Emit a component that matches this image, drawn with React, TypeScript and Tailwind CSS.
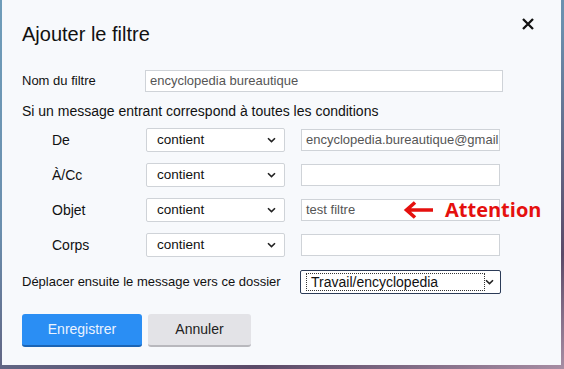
import React from "react";

const Chevron = ({ className = "" }: { className?: string }) => (
  <svg width="9" height="6" viewBox="0 0 9 6" className={className}>
    <path d="M1 1.2 L4.5 4.6 L8 1.2" fill="none" stroke="#222" strokeWidth="1.6" />
  </svg>
);

const Select = () => (
  <div className="w-[139px] h-[24px] bg-white border border-[#cfd3d8] rounded-[2px] flex items-center justify-between pl-[10px] pr-[8px] text-[13.5px] text-[#111]">
    <span>contient</span>
    <Chevron />
  </div>
);

const Input = ({ value = "" }: { value?: string }) => (
  <div className="w-[199px] h-[22px] bg-white border border-[#cfd3d8] flex items-center pl-[4px] text-[13px] text-[#555] overflow-hidden whitespace-nowrap">
    {value}
  </div>
);

const Row = ({ label, value, children }: { label: string; value?: string; children?: React.ReactNode }) => (
  <div className="relative flex items-center h-[24px] pl-[30px]">
    <div className="w-[94px] text-[14px] text-[#111]">{label}</div>
    <Select />
    <div className="ml-[16px]">
      <Input value={value} />
    </div>
    {children}
  </div>
);

export default function App() {
  return (
    <div
      className="w-[564px] h-[369px] overflow-hidden bg-[linear-gradient(160deg,#6f9dba_0%,#6b8fae_40%,#5b4a68_80%,#a88ea4_100%)]"
      style={{ fontFamily: '"Liberation Sans", Arial, sans-serif' }}
    >
      <div className="relative ml-[2px] w-[559px] h-[365px] bg-[#f7f9fc] pl-[20px] pt-[22px]">
        <svg className="absolute left-[519px] top-[17px]" width="14" height="14" viewBox="0 0 14 14">
          <path d="M2 2 L12 12 M12 2 L2 12" stroke="#111" strokeWidth="2.3" />
        </svg>
        <div className="text-[20px] leading-[24px] text-[#111]">Ajouter le filtre</div>

        <div className="mt-[24px] flex items-center">
          <div className="w-[123px] text-[13px] text-[#111]">Nom du filtre</div>
          <div className="w-[358px] h-[22px] bg-white border border-[#cfd3d8] flex items-center pl-[4px] text-[13px] text-[#555]">
            encyclopedia bureautique
          </div>
        </div>

        <div className="mt-[9px] text-[14px] leading-[20px] text-[#111]">
          Si un message entrant correspond à toutes les conditions
        </div>

        <div className="mt-[7px] flex flex-col gap-[11px]">
          <Row label="De" value="encyclopedia.bureautique@gmail" />
          <Row label="À/Cc" />
          <Row label="Objet" value="test filtre">
            <div className="absolute left-[381px] top-[1px] flex items-center">
              <svg width="32" height="20" viewBox="0 0 32 20">
                <path d="M30 10 L5 10 M12 2.5 L3.5 10 L12 17.5" fill="none" stroke="#e5100e" strokeWidth="3.6" strokeLinejoin="miter" />
              </svg>
              <span
                className="ml-[10px] text-[20px] font-bold text-[#e5100e] leading-[22px] whitespace-nowrap"
                style={{ fontFamily: '"Open Sans", "Liberation Sans", sans-serif' }}
              >
                Attention
              </span>
            </div>
          </Row>
          <Row label="Corps" />
        </div>

        <div className="mt-[13px] flex items-center">
          <div className="w-[278px] whitespace-nowrap text-[13px] text-[#111]">Déplacer ensuite le message vers ce dossier</div>
          <div className="w-[201px] h-[24px] bg-white border border-[#2b3b57] rounded-[2px] flex items-center pl-[5px] pr-[6px] justify-between">
            <div className="w-[179px] h-[18px] border border-dotted border-[#333] flex items-center pl-[4px] text-[14px] text-[#111]">
              Travail/encyclopedia
            </div>
            <Chevron />
          </div>
        </div>

        <div className="mt-[20px] flex gap-[6px]">
          <div className="w-[120px] h-[33px] rounded-[3px] bg-[#2a8ef4] border-b-2 border-[#1a64b5] flex items-center justify-center text-[14px] text-[#eaf3ff]">
            Enregistrer
          </div>
          <div className="w-[103px] h-[33px] rounded-[3px] bg-[#e3e3e7] border-b-2 border-[#b8b8bd] flex items-center justify-center text-[14px] text-[#222]">
            Annuler
          </div>
        </div>
      </div>
    </div>
  );
}
